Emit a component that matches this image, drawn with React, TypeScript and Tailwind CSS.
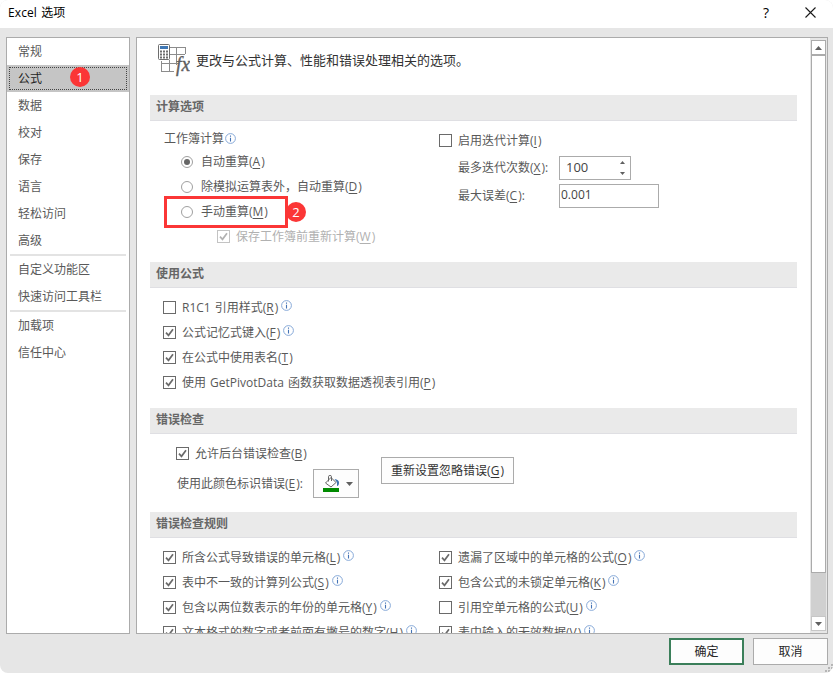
import { ReactNode } from 'react';
import clsx from 'clsx';

type Rule = {
  label: string;
  hotkey: string;
  checked: boolean;
  info?: boolean;
};

const navGroups: string[][] = [
  ['常规', '公式', '数据', '校对', '保存', '语言', '轻松访问', '高级'],
  ['自定义功能区', '快速访问工具栏'],
  ['加载项', '信任中心'],
];

const formulaOptions: Rule[] = [
  { label: 'R1C1 引用样式', hotkey: 'R', checked: false, info: true },
  { label: '公式记忆式键入', hotkey: 'F', checked: true, info: true },
  { label: '在公式中使用表名', hotkey: 'T', checked: true },
  { label: '使用 GetPivotData 函数获取数据透视表引用', hotkey: 'P', checked: true },
];

const rulesLeft: Rule[] = [
  { label: '所含公式导致错误的单元格', hotkey: 'L', checked: true, info: true },
  { label: '表中不一致的计算列公式', hotkey: 'S', checked: true, info: true },
  { label: '包含以两位数表示的年份的单元格', hotkey: 'Y', checked: true, info: true },
  { label: '文本格式的数字或者前面有撇号的数字', hotkey: 'H', checked: true, info: true },
];

const rulesRight: Rule[] = [
  { label: '遗漏了区域中的单元格的公式', hotkey: 'O', checked: true, info: true },
  { label: '包含公式的未锁定单元格', hotkey: 'K', checked: true, info: true },
  { label: '引用空单元格的公式', hotkey: 'U', checked: false, info: true },
  { label: '表中输入的无效数据', hotkey: 'V', checked: true, info: true },
];

function Label({ text, hotkey, suffix }: { text: string; hotkey: string; suffix?: string }) {
  return (
    <span className="whitespace-nowrap [word-spacing:1px]">
      {text}(<span className="pr-px underline underline-offset-2">{hotkey}</span>){suffix}
    </span>
  );
}

function InfoIcon({ className }: { className?: string }) {
  return (
    <svg viewBox="0 0 11 11" className={clsx('h-[11px] w-[11px] shrink-0', className)} fill="none">
      <circle cx="5.5" cy="5.5" r="4.9" stroke="#7ba0d4" strokeWidth="0.9" />
      <path d="M5.5 2.6v1.2M5.5 4.8v3.6" stroke="#4473b5" strokeWidth="1.1" />
    </svg>
  );
}

function Checkbox({ checked, disabled }: { checked: boolean; disabled?: boolean }) {
  return (
    <span
      className={clsx(
        'flex h-[13px] w-[13px] shrink-0 items-center justify-center border bg-white',
        disabled ? 'border-[#c3c3c3] text-[#b1b1b1]' : 'border-[#6a6a6a] text-[#6a6a6a]'
      )}
    >
      {checked && (
        <svg viewBox="0 0 11 11" className="h-[11px] w-[11px]" fill="none">
          <path d="M2 5.6l2.5 2.7L9 2.3" stroke="currentColor" strokeWidth="1.7" />
        </svg>
      )}
    </span>
  );
}

function Radio({ selected }: { selected?: boolean }) {
  return (
    <span className="flex h-3 w-3 shrink-0 items-center justify-center rounded-full border border-[#a0a0a0] bg-white">
      {selected && <span className="h-1.5 w-1.5 rounded-full bg-[#666666]" />}
    </span>
  );
}

function CheckRow({ rule }: { rule: Rule }) {
  return (
    <div className="flex h-[25px] items-center">
      <Checkbox checked={rule.checked} />
      <span className="ml-1.5">
        <Label text={rule.label} hotkey={rule.hotkey} />
      </span>
      {rule.info && <InfoIcon className="mb-1 ml-[3px]" />}
    </div>
  );
}

function Section({ title, className, children }: { title: string; className: string; children: ReactNode }) {
  return (
    <section>
      <h2 className="flex h-[26px] items-center border-b border-[#dfdfe3] bg-[#eaeaea] pb-px pl-1.5 font-bold text-[#666666]">
        {title}
      </h2>
      <div className={className}>{children}</div>
    </section>
  );
}

function Badge({ children, className }: { children: ReactNode; className: string }) {
  return (
    <span
      className={clsx(
        'absolute flex h-5 w-5 items-center justify-center rounded-full bg-[#fb3636] text-[13px] leading-none text-white',
        className
      )}
    >
      {children}
    </span>
  );
}

function FormulaIcon() {
  return (
    <svg viewBox="0 0 32 33" className="h-[33px] w-8 shrink-0" fill="none">
      <path
        d="M12 3.500h16M12 10.500h15M3 19.500h18M3 27.500h13M3.500 17v11M11.500 16v12M18.500 3v18M27.500 3v7"
        stroke="#8c8c8c"
      />
      <rect x="0.500" y="0.500" width="11" height="15" rx="1" fill="#fff" stroke="#6d6d6d" />
      <path d="M2 2h8v3H2z" fill="#3f78b5" />
      <path d="M2 7.500h8M2 10.500h8M2 13.500h8" stroke="#6d6d6d" strokeWidth="2" strokeDasharray="2 1" />
      <text
        x="18"
        y="27"
        fill="#5f5f5f"
        stroke="#5f5f5f"
        strokeWidth="0.4"
        className="font-['Liberation_Serif',serif] text-[22px] italic"
        textLength="14"
        lengthAdjust="spacingAndGlyphs"
      >
        fx
      </text>
    </svg>
  );
}

function BucketIcon() {
  return (
    <svg viewBox="0 0 17 17" className="h-[17px] w-[17px]" fill="none">
      <path d="M2.500 8l5.500-5.500L13 7.500 8 12z" stroke="#666" fill="#fff" />
      <path d="M5.500 6.500V1.500q0-1 1.500-1t1.500 1V6" stroke="#666" />
      <path d="M11.500 4q4.500.5 4.500 3.500c0 2-.5 3.500-2 3.500V7.500z" fill="#3f73ad" />
      <path d="M0 13h16v4H0z" fill="#008a00" />
    </svg>
  );
}

function Arrow({ up, className }: { up?: boolean; className: string }) {
  return (
    <svg viewBox="0 0 8 4" preserveAspectRatio="none" className={className}>
      <path d={up ? 'M0 4L4 0l4 4z' : 'M0 0h8L4 4z'} fill="#606060" />
    </svg>
  );
}

function Sidebar() {
  return (
    <nav className="w-[124px] border border-[#ababab] bg-white">
      {navGroups.map((group, index) => (
        <div key={group[0]}>
          {index > 0 && <div className="mx-[3px] h-0.5 bg-[#e3e3e3]" />}
          {group.map((item) =>
            item === '公式' ? (
              <div key={item} className="relative h-[27px] bg-[#c5c5c5] p-0.5">
                <div className="flex h-[23px] items-center border border-dotted border-[#444444] pl-2 text-[#262626]">
                  {item}
                </div>
                <Badge className="top-0.5 left-[63px]">1</Badge>
              </div>
            ) : (
              <div key={item} className="flex h-[27px] items-center pl-[11px]">
                {item}
              </div>
            )
          )}
        </div>
      ))}
    </nav>
  );
}

function Scrollbar() {
  return (
    <div className="flex w-[17px] shrink-0 flex-col bg-[#e6e6e6] px-px pt-0.5 pb-0.5">
      <div className="flex h-[15px] items-center justify-center border border-[#ababab] bg-white">
        <Arrow up className="h-1 w-[7px]" />
      </div>
      <div className="h-[518px] border border-[#ababab] bg-white" />
      <div className="flex-1 bg-[#d0d0d0]" />
      <div className="flex h-[15px] items-center justify-center border border-[#c6c6c6] bg-white">
        <Arrow className="h-1 w-[7px]" />
      </div>
    </div>
  );
}

function CalculationSection() {
  return (
    <Section title="计算选项" className="flex h-[141px]">
      <div className="w-[289px] pt-[7px] pl-3.5">
        <div className="flex h-[21px] items-center pt-px">
          工作簿计算
          <InfoIcon className="mb-0.5 ml-px" />
        </div>
        <div className="pl-[17px]">
          <div className="flex h-[25px] items-center gap-2">
            <Radio selected />
            <Label text="自动重算" hotkey="A" />
          </div>
          <div className="flex h-[25px] items-center gap-2">
            <Radio />
            <Label text="除模拟运算表外，自动重算" hotkey="D" />
          </div>
          <div className="relative flex h-[25px] items-center gap-2">
            <Radio />
            <Label text="手动重算" hotkey="M" />
            <div className="absolute -top-[3px] -left-[17px] h-8 w-[124px] border-3 border-[#fb3636]" />
            <Badge className="top-[3px] left-[105px]">2</Badge>
          </div>
          <div className="flex h-[25px] items-center gap-1.5 pl-9 text-[#b1b1b1]">
            <Checkbox checked disabled />
            <Label text="保存工作簿前重新计算" hotkey="W" />
          </div>
        </div>
      </div>
      <div className="pt-[7px]">
        <CheckRow rule={{ label: '启用迭代计算', hotkey: 'I', checked: false }} />
        <div className="flex h-7 items-center pt-0.5 pl-[19px]">
          <span className="w-[101px]">
            <Label text="最多迭代次数" hotkey="X" suffix=":" />
          </span>
          <div className="flex h-6 w-[72px] items-center justify-between border border-[#ababab] bg-white pr-[5px] pb-px pl-1.5 text-[13px] text-[#444444]">
            100
            <span className="flex flex-col gap-2">
              <Arrow up className="h-[3px] w-[5px]" />
              <Arrow className="h-[3px] w-[5px]" />
            </span>
          </div>
        </div>
        <div className="flex h-7 items-center pt-0.5 pl-[19px]">
          <span className="w-[101px]">
            <Label text="最大误差" hotkey="C" suffix=":" />
          </span>
          <div className="flex h-6 w-[100px] items-center border border-[#ababab] bg-white pb-[3px] pl-px text-[12px] text-[#444444]">
            0.001
          </div>
        </div>
      </div>
    </Section>
  );
}

function ErrorCheckingSection() {
  return (
    <Section title="错误检查" className="flex h-[78px]">
      <div className="w-[231px] pt-[7px] pl-[26px]">
        <CheckRow rule={{ label: '允许后台错误检查', hotkey: 'B', checked: true }} />
        <div className="mt-[3px] flex h-[29px] items-center">
          <span className="w-[137px] pl-px">
            <Label text="使用此颜色标识错误" hotkey="E" suffix=":" />
          </span>
          <div className="flex h-[29px] w-[46px] items-center justify-between border border-[#ababab] bg-[#fdfdfd] pr-[5px] pl-[9px]">
            <BucketIcon />
            <Arrow className="h-1 w-[7px]" />
          </div>
        </div>
      </div>
      <button className="mt-[23px] h-[27px] w-[133px] border border-[#ababab] bg-[#fdfdfd] text-[#333333]">
        <Label text="重新设置忽略错误" hotkey="G" />
      </button>
    </Section>
  );
}

export default function App() {
  return (
    <div className="flex h-[673px] w-[833px] flex-col overflow-hidden rounded-lg bg-[#e6e6e6] font-['Open_Sans','Noto_Sans_CJK_SC',sans-serif] text-[12px] leading-none text-[#595959]">
      <header className="flex h-7 items-center bg-white pb-0.5 pl-2 text-black">
        <h1 className="flex-1 tracking-[0.1px] [word-spacing:1px]">Excel 选项</h1>
        <span className="w-[42px] text-[14px] font-medium">?</span>
        <svg viewBox="0 0 11 11" className="mr-[17px] mb-0.5 h-[11px] w-[11px]" stroke="#1a1a1a" strokeWidth="1.1">
          <path d="M.5.5l10 10M10.500.5l-10 10" />
        </svg>
      </header>

      <div className="mt-[9px] flex h-[597px] gap-1.5 pl-1.5">
        <Sidebar />
        <main className="flex w-[692px] border border-[#ababab] bg-white">
          <div className="h-[595px] w-[673px] overflow-hidden pr-[13px] pl-[13px]">
            <div className="flex h-[57px] items-start pt-1.5 pl-2">
              <FormulaIcon />
              <p className="mt-2.5 ml-1.5 text-[13px] text-[#333333]">更改与公式计算、性能和错误处理相关的选项。</p>
            </div>
            <CalculationSection />
            <Section title="使用公式" className="h-[120px] pt-[7px] pl-[13px]">
              {formulaOptions.map((rule) => (
                <CheckRow key={rule.hotkey} rule={rule} />
              ))}
            </Section>
            <ErrorCheckingSection />
            <Section title="错误检查规则" className="flex pt-[7px] pl-[13px]">
              <div className="w-[276px]">
                {rulesLeft.map((rule) => (
                  <CheckRow key={rule.hotkey} rule={rule} />
                ))}
              </div>
              <div>
                {rulesRight.map((rule) => (
                  <CheckRow key={rule.hotkey} rule={rule} />
                ))}
              </div>
            </Section>
          </div>
          <Scrollbar />
        </main>
      </div>

      <footer className="relative mt-1 flex justify-end gap-[9px] pr-[5px] text-[#262626]">
        <button className="h-[27px] w-[75px] border-2 border-[#3b7f5a] bg-[#fdfdfd]">确定</button>
        <button className="h-[27px] w-[75px] border border-[#ababab] bg-[#fdfdfd]">取消</button>
        <svg viewBox="0 0 8 8" className="absolute top-[26px] right-0 h-2 w-2" fill="#b5b5b5">
          <path d="M6 0h2v2H6zM3 3h2v2H3zM6 3h2v2H6zM0 6h2v2H0zM3 6h2v2H3zM6 6h2v2H6z" />
        </svg>
      </footer>
    </div>
  );
}
